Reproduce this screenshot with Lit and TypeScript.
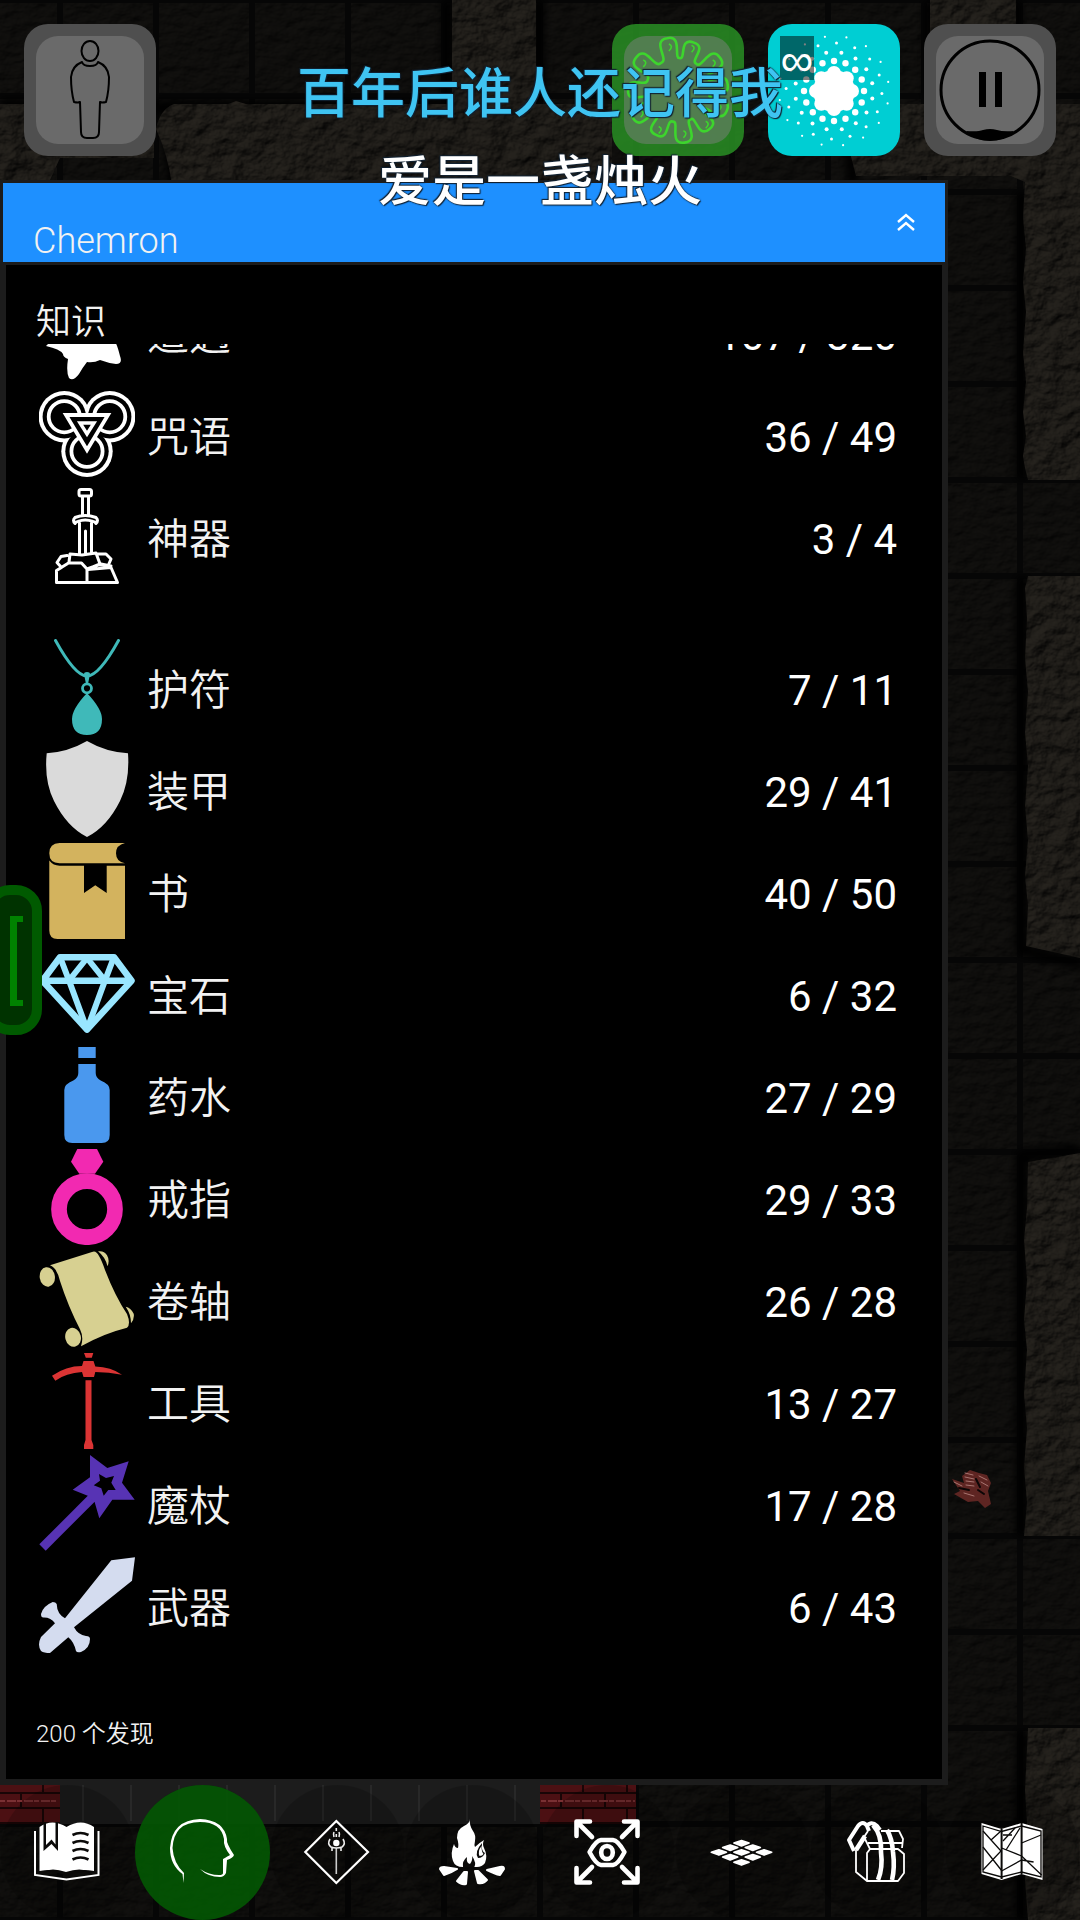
import { LitElement, html, svg, css } from "lit";
import { customElement, property } from "lit/decorators.js";

const polar = (cx: number, cy: number, r: number, deg: number) => {
  const a = (deg * Math.PI) / 180;
  return [cx + r * Math.sin(a), cy - r * Math.cos(a)];
};

const ring = (r: number, n: number, size: number, phase: number) =>
  Array.from({ length: n }, (_, i) => {
    const [x, y] = polar(66, 67, r, phase + (360 / n) * i);
    return svg`<circle cx=${x.toFixed(1)} cy=${y.toFixed(1)} r=${size}></circle>`;
  });

const lobes = [-12, 18, 52, 84, 113, 141, 173, 206, 238, 270, 308];
const at = (r: number, deg: number) => polar(66, 66, r, deg).map((v) => v.toFixed(1)).join(" ");
const splat = (() => {
  let d = "";
  lobes.forEach((a, i) => {
    const prev = i ? lobes[i - 1] : lobes[lobes.length - 1] - 360;
    const next = i < lobes.length - 1 ? lobes[i + 1] : lobes[0] + 360;
    const from = (prev + a) / 2;
    const to = (a + next) / 2;
    const tip = i % 2 ? 50 : 53;
    if (!i) d = `M${at(32, from)}`;
    d += `C${at(31, a - 3)} ${at(tip + 3, a - 17)} ${at(tip, a)}C${at(tip + 3, a + 17)} ${at(31, a + 3)} ${at(32, to)}`;
  });
  return d + "z";
})();

const glints = lobes.map((d) => {
  const [x, y] = polar(66, 66, 44, d);
  return svg`<path d="M${x.toFixed(1)} ${(y - 3).toFixed(1)}q5 2 0 7"></path>`;
});

const topIcons: Record<string, unknown> = {
  person: svg`<g fill="none" stroke="#000" stroke-width="2" stroke-linejoin="round">
    <ellipse cx="66" cy="27" rx="8.5" ry="10"></ellipse>
    <path d="M58 38q-10 4-11 15 0 14 3 25 4 1 6 0l1 30q0 6 6 6h6q6 0 6-6l1-30q2 1 6 0 3-11 3-25-1-11-11-15-1 4-8 4t-8-4z"></path></g>`,
  splat: svg`<g fill="none" stroke="#3dd52d" stroke-width="2.600" stroke-linejoin="round">
    <path d=${splat}></path><g stroke-width="1.600">${glints}</g></g>`,
  burst: svg`<g fill="#fff"><circle cx="66" cy="67" r="21"></circle>
    ${ring(18, 8, 7, 0)}${ring(30, 16, 3.2, 0)}${ring(39, 16, 2, 11)}${ring(48, 16, 1.5, 3)}${ring(55, 16, 1.1, 13)}</g>`,
  pause: svg`<circle cx="66" cy="66" r="49" fill="none" stroke="#000" stroke-width="3"></circle>
    <path d="M55 48h7v35h-7zM71 48h7v35h-7zM42 107q12 1 17-1 7-2 14 0 6 2 17 1-10 10-24 10t-24-10z"></path>`,
};

const rowIcons: Record<string, unknown> = {
  encounter: svg`<path fill="#fff" d="M10 20l18 8 14-22 12 22 24-8-2 38q2 2 5 14 3 8-4 8-8-1-16-4-6 3-13 2-4 5-8 12-6 8-10 4-3-6-1-19-5-2-5-5-3-5-17-8l14-14z"></path>`,
  spell: svg`<g fill="#fff"><circle cx="25.3" cy="30.7" r="25.7"></circle><circle cx="70.7" cy="30.7" r="25.7"></circle><circle cx="48" cy="65.3" r="25.7"></circle></g>
    <circle cx="25.3" cy="30.7" r="21.7"></circle><circle cx="70.7" cy="30.7" r="21.7"></circle><circle cx="48" cy="65.3" r="21.7"></circle>
    <g fill="none" stroke="#fff" stroke-width="3.8"><circle cx="25.3" cy="30.7" r="15.6"></circle><circle cx="70.7" cy="30.7" r="15.6"></circle><circle cx="48" cy="65.3" r="15.6"></circle></g>
    <path d="M27 29h42L48 64z" stroke="#fff" stroke-width="3.8"></path><path d="M41 37h14l-7 11z" stroke="#fff" stroke-width="3.4"></path>`,
  artifact: svg`<g fill="none" stroke="#fff" stroke-width="3" stroke-linejoin="round" stroke-linecap="round">
    <rect x="40" y="1.500" width="12.500" height="6.500" rx="2"></rect><path d="M43.500 8.500v18M49.500 8.500v18M36 35.500q-3-3 0-6 10-4 21 0 3 3 0 6-1-2-3-2-8-3-15 0-2 0-3 2zM40.500 35v31M52.500 35v30M46.500 43v22"></path>
    <path d="M17.500 94.500v-12l12-7.500h13l5.500 6v13.500M17.500 94.500h61l-6.500-15-23 2-1 0M17.500 82.500l5-3-4.500-5 4-6 6-1M30 74l1-8 12 1 14-2 4 11-12 5M57 66h10l5 5-3 7-8-1M48 81l14-5 10 2"></path></g>`,
  amulet: svg`<path d="M16.500 1.500Q36 37 48 37T79.500 1.500" fill="none" stroke="#3fb9b9" stroke-width="3" stroke-linecap="round"></path>
    <circle cx="48" cy="49.300" r="4.500" fill="none" stroke="#3fb9b9" stroke-width="2.800"></circle>
    <path fill="#3fb9b9" d="M45 35q0-2 3-2t3 2l-2 10h-2zM48 54Q63 70 63 80 63 96 48 96T33 80Q33 70 48 54z"></path>`,
  armor: svg`<path fill="#dadada" d="M48 0Q67 11 89 12.300 91 40 81 60 68 86 48 96 28 86 15 60 5 40 7.700 12.300 29 11 48 0z"></path>`,
  book: svg`<path fill="#d3b35e" d="M20.500 0H86Q77 2 77 10.300T86 20.300H20.500Q10.300 20 10.300 10.200T20.500 0zM10.300 17.500q4 5.200 10.200 5.200H45V50l11.300-7.700L67.700 50V22.700H86V96H18.500q-8.200 0-8.200-8.500z"></path>`,
  gem: svg`<g fill="none" stroke="#99e6ff" stroke-width="6.600" stroke-linejoin="round"><path d="M21 12.300h54l17.500 23.500L48 84.500 3.500 35.800zM3.500 35.800h89"></path><path stroke-width="6" d="M21 12l9 23.500L48 13l18 22.500L75 12M30 35.500l18 49 18-49"></path></g>`,
  potion: svg`<path fill="#4a98ee" d="M39.300 0h17.400v11H39.300zM39.300 17h17.400v9q0 5 5 7.500 9 3.500 9 9.500v45q0 8-8 8H33.300q-8 0-8-8V43q0-6 9-9.500 5-2.500 5-7.500z"></path>`,
  ring: svg`<path fill="#f229b1" d="M38.300 0H58l6.300 12.700-8.300 12H40.300L32 12.700z"></path><circle cx="48" cy="60.200" r="28" fill="none" stroke="#f229b1" stroke-width="15.700"></circle>`,
  scroll: svg`<path fill="#d7d091" d="M11 14.300L53 1q4-2 7 4 3 5 6 14 10 26 22 44 4 10 0 13.700-24 6-46 18.600 3-9-1-17Q29 55 21 30 18 17 11 14.300z"></path>
    <ellipse cx="8.300" cy="26" rx="7.600" ry="9.800" fill="#d7d091" transform="rotate(-8 8 26)"></ellipse><ellipse cx="34" cy="86.300" rx="7.800" ry="9.500" fill="#d7d091" transform="rotate(-14 34 86)"></ellipse>
    <path fill="#d7d091" d="M59 .3q6-1 9 4 3 5 .5 11-2-9-9.500-15zM86.700 55.700q5 1 8 7 1 5-2.700 9.600 0-9-5.300-16.600z"></path>`,
  tool: svg`<path fill="#db3434" d="M45 0h9.300l-1.500 4.700h-6zM44.500 8H54.500l1.800 5.500Q72 14 83 21.700 70 19 56.300 19L55 24H44.500l-1.500-5Q27 20 16.300 27.700L13 22.700Q27 13 43 13zM46.500 27.300h6V87l1.800 5v4H45v-4l1.500-5z"></path>`,
  wand: svg`<path fill="none" stroke="#5733b4" stroke-width="9" d="M3.500 92.500L54 42"></path>
    <path fill="#5733b4" fill-rule="evenodd" d="M51 0l17.300 13 21.400-6.700L83 27.700l12.700 17H73.300l-13 18.600L55.700 47.300l-7-6.500-15-6.100L51 22.300zM60 19l1 6.700-6.300 4.600 7.600 3 2.400 7.400 4.600-5.700h7.400l-4.400-7.300L75 21l-8 2z"></path>`,
  weapon: svg`<path fill="#d4dcef" d="M96 .3L72.300 3.300 26 61.300Q18 57 17.700 47q-1-2-4-2Q4 49 2 57q0 4 3 3.500 7 0 11 5.800L2 80q-4 8 0 14 3 2 9 2L29.300 80.300Q35 85 37 94q1 2 5 1 9-4 9-13 0-3-4-3Q39 78 35 70.300L93 23.700z"></path>`,
};

const dk = "#0b0a09";
const cells = [0, 1, 2].flatMap((r) =>
  [0, 1, 2].map((c) => {
    const x = 32.5 + (c - r) * 11.3;
    const y = 24 + (c + r) * 4.4 + (c + r) * (c + r) * 0.1;
    return svg`<path d=${`M${x - 7.6} ${y}l7.600-2.500 7.600 2.500-7.600 2.900z`}></path>`;
  })
);

const navIcons: Record<string, unknown> = {
  journal: svg`<path d="M1 12v44l31.500 4.500L64.500 56V12" fill="none" stroke="#fff" stroke-width="2"></path>
    <path fill="#fff" d="M5.500 8Q18-1 32.500 8 47-1 60 8v44q-14-3-27.500 2Q19 49 5.500 52z"></path>
    <path fill=${dk} d="M8 53q10-5 24 0 14-5 25 0-14-1-25 4-10-5-24-4zM9.500 3h2.500v23l5.500-5.500 4 5V3H24v29l-6.500-7-8 7z"></path>
    <path fill="none" stroke=${dk} stroke-width="2.600" d="M38.500 16q8-4 16 0M38.500 24q8-4 16 0M38.500 32q8-4 16 0M38.500 40.500q8-4 16 0"></path>`,
  mind: svg`<path fill="#fff" d="M14.500 64L13.500 55Q1 46 1 29 3 1 31 0 55 1 58 20q-1 4 7 16-1 3-7 5l-1 13q-2 4-6 4-12 0-20-8 9 6 19 6 4 0 4-2V40q5-3 7-4-7-9-6-16Q52 3 31 3 5 3 3.500 29q1 15 11.500 25z"></path>`,
  quest: svg`<path d="M32.300 2L64 33 32.300 64 1.300 33z" fill="none" stroke="#fff" stroke-width="2.200"></path>
    <path d="M32.300 29v26" stroke="#ccc" stroke-width="1.600"></path><circle cx="32.300" cy="24" r="3.200" fill="#fff"></circle>
    <path d="M26 20q-3 5 1 8 5 2 11 0 4-3 1-8M28 28v4M37 28v4M30 18q-1-3 0-5M32.300 12v-3M35 18q1-3 0-5M32.300 18v-3" fill="none" stroke="#eee" stroke-width="1.600"></path>`,
  camp: svg`<path fill="#fff" d="M31 0q-1 6 3 12 3 4 2 10-1 4 0 6 4-4 9-7-2 4 0 8 4 8 1 15-3 4-8 4H24q-8 0-10-6-3-8 1-17 1 4 4 4 1-4-1-10 0-9 7-12 6-3 6-7z"></path>
    <g fill="#fff" stroke="#fff" stroke-width="2" stroke-linejoin="round"><path d="M1 50q0-2 4-2l13 2Q12 54 5 56zM65 50q0-3-4-2l-13 3q8 4 13 5zM25 53h3l-1 12q-5 1-9-3zM36 52h3l9 9q-3 4-9 3z"></path></g>
    <path fill=${dk} d="M39 39q-4-6 4-15-1 8 3 10-2 5-7 5zM24 48q-1-6 4-10-1 6 3 7 3-4 2-8 5 7 2 12z"></path>
    <path fill="#fff" d="M40.500 37q-2-5 2-10 0 6 2 8-1 2-4 2z"></path>`,
  focus: svg`<g fill="none" stroke="#fff" stroke-width="4.600" stroke-linecap="round" stroke-linejoin="round">
    <path d="M2.500 17V2.500H16M3 3l15 15M63.500 17V2.500H50M63 3L48 18M2.500 49v14.500H16M3 63l15-15M63.500 49v14.500H50M63 63L48 48"></path>
    <path stroke-width="4.400" d="M15.500 33Q22 21.500 27 21h12q5 .5 11.500 12Q44 45.500 39 46H27Q22 45.500 15.500 33z"></path><ellipse cx="33" cy="33.500" rx="5.800" ry="6.500"></ellipse></g>`,
  floor: svg`<g fill="#fff" stroke="#fff" stroke-width="1.600" stroke-linejoin="round">${cells}</g>`,
  pack: svg`<g fill="none" stroke="#fff" stroke-linejoin="round"><path stroke-width="4" d="M10 32L5 21 14 7q5-6 9 0l2 5M22 8q5-7 11-1l3 4"></path>
    <path stroke-width="1.800" d="M12 31v22l11 9h31l6-8V35l-6-5H26l-6-12 4-6M23 62V34l3-4M48 12h7l4 8-1 9M24 24h34"></path>
    <path stroke-width="4.600" d="M29 6q9 10 8 27 2 16-3 28M43 11q5 8 6 22 2 16-1 28M12 31l9-14"></path>
    <path stroke-width="2" d="M37 12h18"></path></g>`,
  map: svg`<path fill="#fff" d="M2.500 4l20 6 20-6 21 6v51l-21-6-20 6-20-6z"></path>
    <g fill="none" stroke=${dk} stroke-width="1.300"><path d="M4 7l18.600 5.500L42.600 7 62 12v46L42.600 53 22.600 58 4 53z"></path><path stroke-width="2" d="M22.600 10v50M42.600 4v51"></path>
    <path d="M4 12l18 20-18 19M4 28l19 24M12 21L22 12M22.600 29l20 8 20 19M24 22L36 9M27 31L41 9M42.600 24L62 16M22.600 52l20-11 12 2M24 16h9"></path></g>`,
};

@customElement("game-scene")
class GameScene extends LitElement {
  static styles = css`
    :host { display: block; overflow: hidden; background: #060606; }
    .scene { display: block; width: 100%; height: 100%; }
  `;
  render() {
    const tiles = [];
    for (let x = -36; x < 1080; x += 96)
      for (let y = 0; y < 1920; y += 96)
        tiles.push(svg`<rect x=${x + 3} y=${y + 3} width="90" height="90"></rect>`);
    const seams = [];
    for (let x = 83; x < 540; x += 48) seams.push(svg`<path d=${`M${x} 1785v36`}></path>`);
    const bricks = [];
    for (const [x0, x1] of [[0, 60], [540, 636]])
      for (let r = 0; r < 3; r++)
        for (let x = x0 + (r % 2 ? -22 : 0); x < x1; x += 44)
          bricks.push(svg`<rect x=${Math.max(x, x0)} y=${1779 + r * 15} width=${Math.min(x + 42, x1) - Math.max(x, x0)} height="13"></rect>`);
    const shades = Array.from({ length: 8 }, (_, i) => svg`<circle cx=${67.5 + i * 135} cy="1852" r="67"></circle>`);
    return html`<svg class="scene" viewBox="0 0 1080 1920" preserveAspectRatio="xMidYMin slice" aria-hidden="true">
      <defs>
        <filter id="slate" x="0" y="0" width="100%" height="100%" color-interpolation-filters="sRGB">
          <feTurbulence type="fractalNoise" baseFrequency="0.06 0.1" numOctaves="4" seed="3"></feTurbulence>
          <feDiffuseLighting surfaceScale="2.500" lighting-color="#12110f"><feDistantLight azimuth="230" elevation="52"></feDistantLight></feDiffuseLighting>
          <feComposite in2="SourceAlpha" operator="in"></feComposite>
        </filter>
        <filter id="rock" x="0" y="0" width="100%" height="100%" color-interpolation-filters="sRGB">
          <feTurbulence type="fractalNoise" baseFrequency="0.05 0.06" numOctaves="5" seed="8"></feTurbulence>
          <feDiffuseLighting surfaceScale="4.500" lighting-color="#26231e"><feDistantLight azimuth="230" elevation="50"></feDistantLight></feDiffuseLighting>
          <feComposite in2="SourceAlpha" operator="in"></feComposite>
        </filter>
        <filter id="soft" x="-5%" y="-5%" width="110%" height="110%"><feGaussianBlur stdDeviation="4"></feGaussianBlur></filter>
      </defs>
      <g filter="url(#slate)">${tiles}</g>
      <g fill="none" stroke="#000" stroke-width="12" filter="url(#soft)">
        <path d="M0 104h140q20 4 26 2h370M166 110l8 76M448 0v100M538 0v100M930 0v100M1016 0v100M844 104l10 80M1022 192V480M1022 576v374l60 14M1080 1150l-58 6v380M1022 1730v190"></path>
      </g>
      <g filter="url(#rock)">
        <path d="M0 104H40q14 2 20-2h78q16 3 16 14V158H60L50 180H0z"></path>
        <path d="M452 0h84v104h76V185H172q-4-30-16-56 4-20 18-25h54l8-3 10 3h206z"></path>
        <path d="M930 0h86v104h64V480h-52l-3-12-2-12 3-20-3-24 3-30-3-30 3-40-3-30 3-34-3-30 2-36-14-6H856L842 122l12-18h76z"></path>
        <path d="M1028 576h52V958l-54-12 2-40-3-30 3-36-3-34 3-40-3-34 3-40-3-34 2-40-2-30z"></path>
        <path d="M1080 1153V1536h-56l3-34-3-34 3-40-3-34 3-44-3-30 3-40-3-40 3-32 1-46z"></path>
        <path d="M1028 1728h52v192h-52l-3-40 3-40-3-50z"></path>
      </g>
      <rect x="60" y="1785" width="480" height="39" fill="#1c1c1c"></rect>
      <g stroke="#343434" stroke-width="1">${seams}</g>
      <path d="M0 1779h60v45H0zM540 1779h96v45h-96z" fill="#190506"></path>
      <g fill="#4c1013">${bricks}</g>
      <path d="M0 1801h58M541 1801h94" stroke="#7a3033" stroke-width="2" stroke-dasharray="5 2 9 1"></path>
      <g fill="#000" opacity=".18">${shades}</g>
      <path fill="#5e2522" d="M952 1479l12 4-2-7 8-6 9 3 8 2 4 8-3 8 3 13-6 4-7-7-10 1-14-8 6-3z"></path>
      <g fill="none" stroke-linecap="round">
        <path stroke="#a87571" stroke-width="1" d="M965 1473l8 2M965 1477l9 2M966 1481l8 1M966 1485l8 1M979 1476l8 4M954 1482l8 4M981 1482l7 4M964 1493l10 3"></path>
        <path stroke="#0c0606" stroke-width="2" d="M959 1488l10 2M976 1479l4 8M978 1490l6 4"></path>
      </g>
    </svg>`;
  }
}

@customElement("tool-button")
class ToolButton extends LitElement {
  @property() name = "";
  @property() label = "";
  @property() badge = "";
  static styles = css`
    :host { display: block; }
    .tool { position: relative; display: grid; width: 132px; height: 132px; padding: 12px; border: 0; border-radius: 24px; background: #4f4f4f; }
    .tool::before { content: ""; border-radius: 22px; background: #6a6a6a; }
    .splat { background: rgba(41, 143, 36, 0.85); }
    .splat::before { background: rgba(112, 128, 112, 0.6); }
    .burst { background: #00ced3; }
    .burst::before { background: transparent; }
    .icon { position: absolute; inset: 0; width: 132px; height: 132px; }
    .badge { position: absolute; left: 12px; top: 12px; width: 34px; height: 44px; background: rgba(0, 0, 0, 0.5); color: #fff; font: 400 46px/48px "Liberation Sans", sans-serif; display: flex; justify-content: center; }
  `;
  render() {
    return html`<button class="tool ${this.name}" aria-label=${this.label}>
      <svg class="icon" viewBox="0 0 132 132" aria-hidden="true">${topIcons[this.name]}</svg>
      ${this.badge ? html`<span class="badge">${this.badge}</span>` : null}
    </button>`;
  }
}

type Row = [string, string, string];
const groups: Row[][] = [
  [
    ["encounter", "遭遇", "107 / 320"],
    ["spell", "咒语", "36 / 49"],
    ["artifact", "神器", "3 / 4"],
  ],
  [
    ["amulet", "护符", "7 / 11"],
    ["armor", "装甲", "29 / 41"],
    ["book", "书", "40 / 50"],
    ["gem", "宝石", "6 / 32"],
    ["potion", "药水", "27 / 29"],
    ["ring", "戒指", "29 / 33"],
    ["scroll", "卷轴", "26 / 28"],
    ["tool", "工具", "13 / 27"],
    ["wand", "魔杖", "17 / 28"],
    ["weapon", "武器", "6 / 43"],
  ],
];

@customElement("knowledge-panel")
class KnowledgePanel extends LitElement {
  static styles = css`
    :host { display: flex; flex-direction: column; gap: 3px; padding: 3px; background: #1c1c1c; color: #f2f2f2; font-family: Roboto, "Noto Sans CJK SC", sans-serif; font-weight: 400; }
    .head { display: flex; align-items: flex-end; justify-content: space-between; height: 79px; padding: 0 30px; background: #1e90ff; }
    .name { margin: 0; font-size: 36px; line-height: 42px; font-weight: 350; }
    .fold { display: block; margin-bottom: 31px; padding: 0; border: 0; background: none; }
    .fold svg { display: block; width: 18px; height: 18px; }
    .body { flex: 1; display: flex; flex-direction: column; margin: 0 3px 3px; background: #000; }
    .title { margin: 0; padding: 31px 30px 3px; height: 45px; font-family: "Noto Sans CJK SC", sans-serif; font-size: 35px; line-height: 45px; font-weight: 350; }
    .view { flex: 1; overflow: hidden; padding: 0 45px 0 33px; }
    .groups { display: flex; flex-direction: column; gap: 49px; margin-top: -63px; }
    .list { width: 100%; border-collapse: collapse; }
    .row { height: 102px; }
    .pic { width: 96px; padding: 0; }
    .pic svg { display: block; width: 96px; height: 96px; }
    .label { padding: 0 12px; text-align: left; font-family: "Noto Sans CJK SC", sans-serif; font-size: 42px; line-height: 48px; font-weight: 350; }
    .count { padding: 8px 0 0; text-align: right; font-size: 42px; line-height: 48px; color: #fff; }
    .foot { margin: 0; padding: 0 30px 29px; font-size: 24px; line-height: 32px; font-weight: 350; }
  `;
  render() {
    return html`
      <header class="head">
        <h1 class="name">Chemron</h1>
        <button class="fold" aria-label="折叠">
          <svg viewBox="0 0 18 18" fill="none" stroke="#fff" stroke-width="2.400"><path d="M1 9l8-7 8 7M1 17l8-7 8 7"></path></svg>
        </button>
      </header>
      <div class="body">
        <h2 class="title">知识</h2>
        <div class="view"><div class="groups">
          ${groups.map((rows) => html`<table class="list">${rows.map(([icon, label, count]) => html`
            <tr class="row">
              <td class="pic"><svg viewBox="0 0 96 96" aria-hidden="true">${rowIcons[icon]}</svg></td>
              <th class="label" scope="row">${label}</th>
              <td class="count">${count}</td>
            </tr>`)}</table>`)}
        </div></div>
        <p class="foot">200 个发现</p>
      </div>`;
  }
}

const nav: [string, string][] = [
  ["journal", "日志"], ["mind", "知识"], ["quest", "任务"], ["camp", "营地"],
  ["focus", "视野"], ["floor", "地面"], ["pack", "背包"], ["map", "地图"],
];

@customElement("app-root")
class AppRoot extends LitElement {
  static styles = css`
    :host { display: block; }
    .stage { position: relative; display: flex; flex-direction: column; min-height: 100vh; overflow: hidden; isolation: isolate; }
    .scene { position: absolute; inset: 0; z-index: -1; }
    .tools { display: flex; gap: 24px; padding: 24px; }
    .left { margin-right: auto; }
    .panel { flex: 1; margin-right: 132px; }
    .nav { display: grid; grid-template-columns: repeat(8, 1fr); }
    .item { display: grid; place-items: center; justify-self: center; width: 135px; height: 135px; padding: 0 1px 2px 0; border: 0; border-radius: 50%; background: none; }
    .active { background: rgba(3, 88, 3, 0.9); }
    .item svg { width: 66px; height: 66px; overflow: visible; }
    .lyrics { position: absolute; top: 46px; left: 0; right: 0; text-align: center; pointer-events: none; font-family: "Noto Sans CJK SC", sans-serif; font-size: 54px; line-height: 88px; font-weight: 500; }
    .line { margin: 0; color: #fff; text-shadow: 0 0 2px #123, 1px 1px 1px #123, -1px -1px 1px #123; }
    .sung { color: #3fc4f2; }
    .drawer { position: absolute; left: -16px; top: 885px; width: 58px; height: 150px; padding: 0; border: 10px solid #005a00; border-radius: 26px; background: #030; }
    .drawer svg { position: absolute; left: 16px; top: 21px; width: 13px; height: 90px; }
  `;
  render() {
    return html`<div class="stage">
      <game-scene class="scene"></game-scene>
      <div class="tools">
        <tool-button class="left" name="person" label="角色"></tool-button>
        <tool-button name="splat" label="状态"></tool-button>
        <tool-button name="burst" label="法术" badge="∞"></tool-button>
        <tool-button name="pause" label="暂停"></tool-button>
      </div>
      <knowledge-panel class="panel"></knowledge-panel>
      <nav class="nav">
        ${nav.map(([id, label]) => html`<button class="item ${id === "mind" ? "active" : ""}" aria-label=${label}>
          <svg viewBox="0 0 66 66" aria-hidden="true">${navIcons[id]}</svg>
        </button>`)}
      </nav>
      <button class="drawer" aria-label="侧栏"><svg viewBox="0 0 13 90" aria-hidden="true"><path fill="#008200" d="M0 0h13v6H7v78h6v6H0z"></path></svg></button>
      <div class="lyrics">
        <p class="line sung">百年后谁人还记得我</p>
        <p class="line">爱是一盏烛火</p>
      </div>
    </div>`;
  }
}
